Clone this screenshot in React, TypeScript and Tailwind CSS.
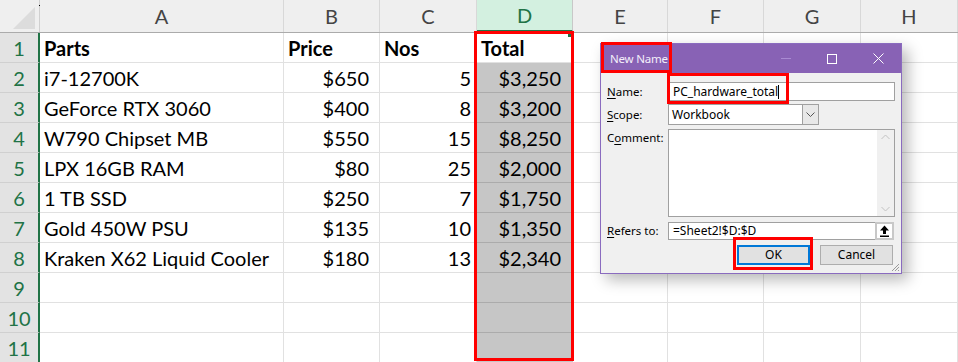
import React from "react";

const cols = [
  { label: "A", w: "w-[244px]", align: "left" },
  { label: "B", w: "w-[96px]", align: "right", pad: "pr-[10px]" },
  { label: "C", w: "w-[97px]", align: "right", pad: "pr-[5px]" },
  { label: "D", w: "w-[96px]", align: "right", pad: "pr-[11px]" },
  { label: "E", w: "w-[95px]", align: "left" },
  { label: "F", w: "w-[96px]", align: "left" },
  { label: "G", w: "w-[97px]", align: "left" },
  { label: "H", w: "w-[97px]", align: "left" },
];

const rows: string[][] = [
  ["Parts", "Price", "Nos", "Total"],
  ["i7-12700K", "$650", "5", "$3,250"],
  ["GeForce RTX 3060", "$400", "8", "$3,200"],
  ["W790 Chipset MB", "$550", "15", "$8,250"],
  ["LPX 16GB RAM", "$80", "25", "$2,000"],
  ["1 TB SSD", "$250", "7", "$1,750"],
  ["Gold 450W PSU", "$135", "10", "$1,350"],
  ["Kraken X62 Liquid Cooler", "$180", "13", "$2,340"],
  [],
  [],
  [],
];

const cellFont = { fontFamily: "Lato, 'Liberation Sans', sans-serif" };
const uiFont = { fontFamily: "'Noto Sans', 'Liberation Sans', sans-serif" };

function ColumnHeader() {
  return (
    <div className="flex h-[33px] border-b border-[#ababab] bg-[#efefef]">
      <div className="relative w-[40px] shrink-0 border-r border-[#d0d0d0]">
        <svg className="absolute right-[4px] bottom-[3px]" width="22" height="22">
          <polygon points="22,0 22,22 0,22" fill="#dcdcdc" />
        </svg>
        <div className="absolute left-[39px] top-[5px] h-px w-px bg-black" />
      </div>
      {cols.map((c) => (
        <div
          key={c.label}
          className={`${c.w} shrink-0 flex items-center justify-center text-[20px] border-r ${
            c.label === "D"
              ? "bg-[#d3f0e0] text-[#217346] border-[#c8c8c8] border-b-2 border-b-[#217346]"
              : "text-[#444] border-[#d8d8d8]"
          }`}
          style={cellFont}
        >
          {c.label}
        </div>
      ))}
    </div>
  );
}

function Row({ idx, data }: { idx: number; data: string[] }) {
  const bold = idx === 0;
  return (
    <div className="flex h-[30px]">
      <div
        className="w-[40px] shrink-0 flex items-center justify-center bg-[#e3e3e3] border-r-2 border-r-[#217346] border-b border-b-[#d0d0d0] text-[20px] text-[#217346]"
        style={cellFont}
      >
        {idx + 1}
      </div>
      {cols.map((c, ci) => {
        const isD = ci === 3;
        const selected = isD && idx > 0;
        return (
          <div
            key={c.label}
            className={`${c.w} shrink-0 relative flex items-center text-[20px] text-black border-r border-b ${
              selected ? "bg-[#c6c6c6] border-b-[#ababab] border-r-[#c6c6c6]" : "border-[#e1e1e1] bg-white"
            } ${bold ? "font-bold justify-start pl-[4px]" : c.align === "right" ? `justify-end ${c.pad}` : "pl-[4px]"}`}
            style={cellFont}
          >
            {data[ci] ?? ""}
            {isD && idx === 0 && (
              <div className="absolute right-[1px] top-[1px] h-[3px] w-[3px] bg-[#217346]" />
            )}
          </div>
        );
      })}
    </div>
  );
}

function U({ children }: { children: string }) {
  return <span className="underline underline-offset-2">{children}</span>;
}

function NewNameDialog() {
  return (
    <div
      className="absolute left-[600px] top-[43px] w-[302px] h-[231px] border border-[#8a6bbf] bg-[#f0f0f0] shadow-[6px_6px_14px_rgba(0,0,0,0.28)] text-[11.5px] text-black flex flex-col"
      style={uiFont}
    >
      <div className="h-[29px] shrink-0 bg-[#8862b5] flex items-center pl-[9px] text-white">
        <span className="text-[#f4effa] text-[11.5px] tracking-[-0.2px]">New Name</span>
        <div className="ml-auto flex items-center h-full">
          <div className="w-[46px] flex justify-center">
            <div className="h-px w-[10px] bg-[#a98ad2]" />
          </div>
          <div className="w-[46px] flex justify-center">
            <div className="h-[10px] w-[10px] border border-white" />
          </div>
          <div className="w-[46px] flex justify-center">
            <svg width="11" height="11" viewBox="0 0 11 11">
              <path d="M0.5 0.5 L10.5 10.5 M10.5 0.5 L0.5 10.5" stroke="white" strokeWidth="1" />
            </svg>
          </div>
        </div>
      </div>

      <div className="flex flex-col pl-[6px] pr-[6px] pt-[9px]">
        <div className="flex items-center h-[19px]">
          <div className="w-[61px] shrink-0">
            <U>N</U>ame:
          </div>
          <div className="w-[227px] h-[19px] bg-white border border-[#a0a0a0] flex items-center pl-[4px] text-[12px]">
            PC_hardware_total<span className="inline-block h-[14px] w-px bg-black" />
          </div>
        </div>

        <div className="flex items-center h-[21px] mt-[3px]">
          <div className="w-[61px] shrink-0">
            <U>S</U>cope:
          </div>
          <div className="w-[151px] h-[21px] bg-white border border-[#a0a0a0] flex items-center pl-[3px] text-[12px]">
            <span className="flex-1">Workbook</span>
            <div className="w-[16px] h-full border-l border-[#a0a0a0] bg-[#e8e8e8] flex items-center justify-center">
              <svg width="9" height="6" viewBox="0 0 9 6">
                <path d="M0.5 0.5 L4.5 4.5 L8.5 0.5" stroke="#555" fill="none" />
              </svg>
            </div>
          </div>
        </div>

        <div className="flex items-start mt-[4px]">
          <div className="w-[61px] shrink-0">
            C<U>o</U>mment:
          </div>
          <div className="w-[227px] h-[88px] bg-white border border-[#a0a0a0] flex justify-end">
            <div className="w-[17px] h-full bg-[#f0f0f0] flex flex-col items-center justify-between py-[4px]">
              <svg width="9" height="6" viewBox="0 0 9 6">
                <path d="M0.5 5 L4.5 1 L8.5 5" stroke="#c2c2c2" fill="none" />
              </svg>
              <svg width="9" height="6" viewBox="0 0 9 6">
                <path d="M0.5 1 L4.5 5 L8.5 1" stroke="#c2c2c2" fill="none" />
              </svg>
            </div>
          </div>
        </div>

        <div className="flex items-center h-[18px] mt-[5px]">
          <div className="w-[61px] shrink-0">
            <U>R</U>efers to:
          </div>
          <div className="w-[226px] h-[18px] bg-white border border-[#a0a0a0] flex items-center pl-[4px] text-[12px]">
            <span className="flex-1">=Sheet2!$D:$D</span>
            <div className="w-[19px] h-[18px] border-2 border-[#c8c8c8] bg-white flex items-center justify-center -mr-px">
              <svg width="11" height="12" viewBox="0 0 11 12">
                <path d="M5.5 0.5 L10 5.5 L7 5.5 L7 9 L4 9 L4 5.5 L1 5.5 Z" fill="black" />
                <rect x="1" y="10.5" width="9" height="1.5" fill="black" />
              </svg>
            </div>
          </div>
        </div>

        <div className="flex justify-end gap-[10px] mt-[5px] pr-[2px] text-[12px]">
          <div className="w-[73px] h-[20px] border-2 border-[#0078d7] bg-[#e1e1e1] flex items-center justify-center">
            OK
          </div>
          <div className="w-[73px] h-[20px] border border-[#adadad] bg-[#e1e1e1] flex items-center justify-center">
            Cancel
          </div>
        </div>
      </div>

      <svg className="absolute right-[1px] bottom-[1px]" width="10" height="10" viewBox="0 0 10 10">
        <path d="M9 2 L2 9 M9 5 L5 9 M9 8 L8 9" stroke="#9a9a9a" strokeWidth="1" />
      </svg>
    </div>
  );
}

export default function App() {
  return (
    <div className="relative w-[958px] h-[362px] overflow-hidden bg-white">
      <ColumnHeader />
      {rows.map((r, i) => (
        <Row key={i} idx={i} data={r} />
      ))}

      {/* selection outline around column D */}
      <div className="absolute left-[474px] top-[31px] w-[100px] h-[330px] border-[3px] border-[#ff0000]" />

      <NewNameDialog />

      {/* red callouts on the dialog */}
      <div className="absolute left-[601px] top-[42px] w-[71px] h-[31px] border-[3px] border-[#ff0000]" />
      <div className="absolute left-[667px] top-[73px] w-[122px] h-[31px] border-[3px] border-[#ff0000]" />
      <div className="absolute left-[733px] top-[237px] w-[80px] h-[33px] border-[3px] border-[#ff0000]" />
    </div>
  );
}
